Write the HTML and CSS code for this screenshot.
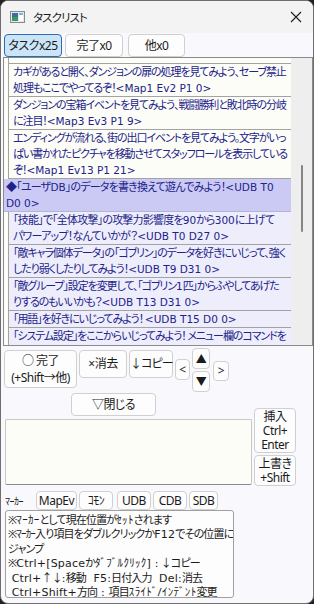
FILE: index.html
```html
<!DOCTYPE html>
<html lang="ja">
<head>
<meta charset="utf-8">
<title>タスクリスト</title>
<link rel="stylesheet" href="styles.css">
</head>
<body>
<div class="win">
  <div class="titlebar">
    <svg class="appicon" width="15" height="12" viewBox="0 0 15 12">
      <rect x="0.5" y="0.5" width="14" height="11" fill="#e8e8e8" stroke="#8a8a8a"/>
      <rect x="2" y="2" width="6" height="8" fill="#3a6ea5"/>
      <rect x="2" y="6" width="6" height="4" fill="#3c9a5a"/>
      <rect x="9" y="2" width="4" height="8" fill="#ffffff"/>
      <rect x="9" y="2" width="4" height="2" fill="#7fb2e0"/>
    </svg>
    <span class="title">タスクリスト</span>
    <svg class="close" width="12" height="12" viewBox="0 0 12 12">
      <path d="M1 1 L11 11 M11 1 L1 11" stroke="#1b1b1b" stroke-width="1.1" fill="none"/>
    </svg>
  </div>

  <div class="tabs">
    <button class="btn tab tab-sel">タスクx25</button>
    <button class="btn tab tab2">完了x0</button>
    <button class="btn tab tab3">他x0</button>
  </div>

  <div class="listbox">
    <div class="items">
      <div class="item pre partial"></div>
      <div class="item pre">カギがあると開く、ダンジョンの扉の処理を見てみよう、セーブ禁止<br>処理もここでやってるぞ！<span class="tag">&lt;Map1 Ev2 P1 0&gt;</span></div>
      <div class="item pre">ダンジョンの宝箱イベントを見てみよう、戦闘勝利と敗北時の分岐<br>に注目！<span class="tag">&lt;Map3 Ev3 P1 9&gt;</span></div>
      <div class="item pre">エンディングが流れる、街の出口イベントを見てみよう。文字がいっ<br>ぱい書かれたピクチャを移動させてスタッフロールを表示している<br>ぞ！<span class="tag">&lt;Map1 Ev13 P1 21&gt;</span></div>
      <div class="item sel">◆「ユーザ<span class="tag">DB</span>」のデータを書き換えて遊んでみよう！<span class="tag">&lt;UDB T0</span><br><span class="tag">D0 0&gt;</span></div>
      <div class="item child">「技能」で「全体攻撃」の攻撃力影響度を<span class="tag">90</span>から<span class="tag">300</span>に上げて<br>パワーアップ！なんていかが？<span class="tag">&lt;UDB T0 D27 0&gt;</span></div>
      <div class="item child">「敵キャラ個体データ」の「ゴブリン」のデータを好きにいじって、強く<br>したり弱くしたりしてみよう！<span class="tag">&lt;UDB T9 D31 0&gt;</span></div>
      <div class="item child">「敵グループ」設定を変更して、「ゴブリン<span class="tag">1</span>匹」からふやしてあげた<br>りするのもいいかも？<span class="tag">&lt;UDB T13 D31 0&gt;</span></div>
      <div class="item child">「用語」を好きにいじってみよう！ <span class="tag">&lt;UDB T15 D0 0&gt;</span></div>
      <div class="item child">「システム設定」をここからいじってみよう！ メニュー欄のコマンドを<br>変更できるぞ！</div>
    </div>
    <div class="scrollbar"><div class="thumb" style="margin-top:107px;height:67px"></div></div>
  </div>

  <div class="controls">
    <div class="row1">
      <button class="btn b-done">○ 完了<br>(+Shift→他)</button>
      <button class="btn b-del">×消去</button>
      <button class="btn b-copy">↓コピー</button>
      <button class="btn b-left">&lt;</button>
      <div class="updown">
        <button class="btn b-arrow">▲</button>
        <button class="btn b-arrow">▼</button>
      </div>
      <button class="btn b-right">&gt;</button>
    </div>

    <div class="row2">
      <div class="leftcol">
        <button class="btn b-close">▽閉じる</button>
        <div class="memo"></div>
      </div>
      <div class="rightcol">
        <button class="btn b-insert">挿入<br>Ctrl+<br>Enter</button>
        <button class="btn b-over">上書き<br>+Shift</button>
      </div>
    </div>

    <div class="markers">
      <span class="mlabel">ﾏｰｶｰ</span>
      <button class="btn mk mk-map">MapEv</button>
      <button class="btn mk mk-com">ｺﾓﾝ</button>
      <button class="btn mk mk-udb">UDB</button>
      <button class="btn mk mk-cdb">CDB</button>
      <button class="btn mk mk-sdb">SDB</button>
    </div>

    <div class="help">※<span class="hw">ﾏｰｶｰ</span>として現在位置が<span class="hw">ｾｯﾄ</span>されます<br>※ﾏｰｶｰ入り項目をダブルクリックか<span class="tag">F12</span>でその位置に<br>ジャンプ<br>※<span class="tag">Ctrl+[Space</span>か<span class="hw">ﾀﾞﾌﾞﾙｸﾘｯｸ</span><span class="tag">] :</span> ↓コピー<br><span class="tag">&nbsp;Ctrl+</span>↑↓<span class="tag">:</span>移動<span class="tag">&nbsp;&nbsp;F5:</span>日付入力<span class="tag">&nbsp;&nbsp;Del:</span>消去<br><span class="tag">&nbsp;Ctrl+Shift+</span>方向<span class="tag"> : </span>項目<span class="hw">ｽﾗｲﾄﾞ/ｲﾝﾃﾞﾝﾄ</span>変更</div>
  </div>
</div>
</body>
</html>
```

FILE: styles.css
```css
* { box-sizing: border-box; }
html, body {
  margin: 0;
  padding: 0;
  background: #202020;
}
body {
  width: 314px;
  height: 604px;
  overflow: hidden;
  font-family: "Noto Sans", "Noto Sans CJK JP", sans-serif;
  font-feature-settings: "palt" 1;
  color: #1b1b1b;
}
.win {
  width: 314px;
  height: 604px;
  border: 1px solid #6e6e6e;
  border-radius: 8px;
  background: #f9f9fd;
  overflow: hidden;
  display: flex;
  flex-direction: column;
}
.titlebar {
  height: 32px;
  flex: none;
  display: flex;
  align-items: center;
  background: #f3f3f3;
  padding-left: 9px;
}
.appicon { flex: none; }
.title {
  font-size: 11.5px;
  letter-spacing: -0.9px;
  margin-left: 8px;
  flex: 1;
}
.close { margin-right: 11px; }

.btn {
  font-family: inherit;
  font-feature-settings: inherit;
  font-size: 12px;
  letter-spacing: -0.5px;
  color: #1b1b1b;
  background: #fdfdfd;
  border: 1px solid #d0d0d0;
  border-radius: 4px;
  padding: 0;
  margin: 0;
  line-height: 16px;
  white-space: nowrap;
  flex: none;
}

.tabs {
  display: flex;
  height: 24px;
  padding: 1px 0 0 3px;
  flex: none;
}
.tab { height: 23px; width: 58px; }
.tab2 { margin-left: 3px; }
.tab3 { margin-left: 5px; width: 57px; }
.tab-sel {
  background: #cce4f7;
  border-color: #2a6cae;
}

.listbox {
  margin-left: 2px;
  width: 310px;
  height: 289px;
  border: 1px solid #8a8a8a;
  background: #fdfdf7;
  display: flex;
  flex: none;
  overflow: hidden;
}
.items {
  width: 287px;
  flex: none;
  overflow: hidden;
  font-size: 11px;
  letter-spacing: -1.1px;
  line-height: 16px;
  color: #22228a;
  white-space: nowrap;
}
.tag {
  font-family: "DejaVu Sans", sans-serif;
  font-size: 10.5px;
  letter-spacing: 0;
  line-height: 10px;
}
.item {
  border-bottom: 1px solid #a3a3a3;
  margin-left: 4px;
  border-left: 1px solid #a3a3a3;
  padding-left: 4px;
}
.pre { background: #fdfdf7; }
.partial { height: 6px; }
.sel {
  margin-left: 0;
  border-left: none;
  padding-left: 2px;
  background: #cacaf4;
  border-bottom-color: #b4b4d4;
  letter-spacing: -0.8px;
}
.child { background: #ededfb; }
.child:nth-child(6) { letter-spacing: -0.8px; }
.scrollbar {
  width: 21px;
  flex: none;
  background: #eeeeee;
  display: flex;
  flex-direction: column;
  align-items: center;
}
.thumb {
  width: 2px;
  background: #858585;
  border-radius: 1px;
}

.controls {
  padding-left: 3px;
  display: flex;
  flex-direction: column;
}
.row1 {
  display: flex;
  align-items: flex-start;
  margin-top: 2px;
  height: 45px;
}
.b-done { width: 73px; height: 38px; margin-top: 2px; line-height: 17px; }
.b-del { width: 48px; height: 28px; margin-top: 2px; margin-left: 2px; }
.b-copy { width: 44px; height: 28px; margin-top: 2px; margin-left: 2px; letter-spacing: -0.9px; }
.b-left { width: 15px; height: 21px; margin-top: 11px; margin-left: 2px; }
.updown { display: flex; flex-direction: column; margin-left: 2px; gap: 2px; }
.b-arrow { width: 18px; height: 21px; font-size: 11px; }
.b-right { width: 16px; height: 20px; margin-top: 13px; margin-left: 3px; }

.row2 {
  display: flex;
  align-items: flex-start;
  height: 97px;
}
.leftcol {
  width: 250px;
  display: flex;
  flex-direction: column;
}
.b-close { width: 85px; height: 23px; margin-left: 67px; }
.memo {
  margin-top: 3px;
  margin-left: 1px;
  width: 247px;
  height: 66px;
  background: #fdfdf7;
  border: 1px solid #c8c8c8;
  border-bottom-color: #8a8a8a;
  border-radius: 2px;
}
.rightcol {
  display: flex;
  flex-direction: column;
  margin-top: 15px;
  gap: 2px;
}
.b-insert { width: 42px; height: 45px; line-height: 14px; }
.b-over { width: 42px; height: 31px; line-height: 14px; }

.markers {
  display: flex;
  align-items: center;
  height: 19px;
  margin-top: 1px;
}
.mlabel {
  font-size: 10px;
  width: 32px;
  padding-left: 1px;
  letter-spacing: -0.5px;
}
.mk { height: 19px; width: 34px; margin-right: 2px; }
.mk-map { width: 41px; }
.mk-com { width: 34px; }
.mk-udb { width: 34px; margin-left: 2px; }
.mk-cdb { width: 34px; }
.mk-sdb { width: 29px; }

.help {
  margin-left: 1px;
  width: 229px;
  height: 88px;
  background: #fdfdfd;
  border: 1px solid #a0a0a0;
  border-radius: 3px;
  font-size: 11px;
  letter-spacing: -0.85px;
  line-height: 14.4px;
  padding: 2px 0 0 2px;
  white-space: nowrap;
  overflow: hidden;
  color: #1b1b1b;
}
.help .tag { font-size: 11px; letter-spacing: 0.2px; line-height: 10px; }
.help .hw { letter-spacing: 0.3px; line-height: 10px; }
```
